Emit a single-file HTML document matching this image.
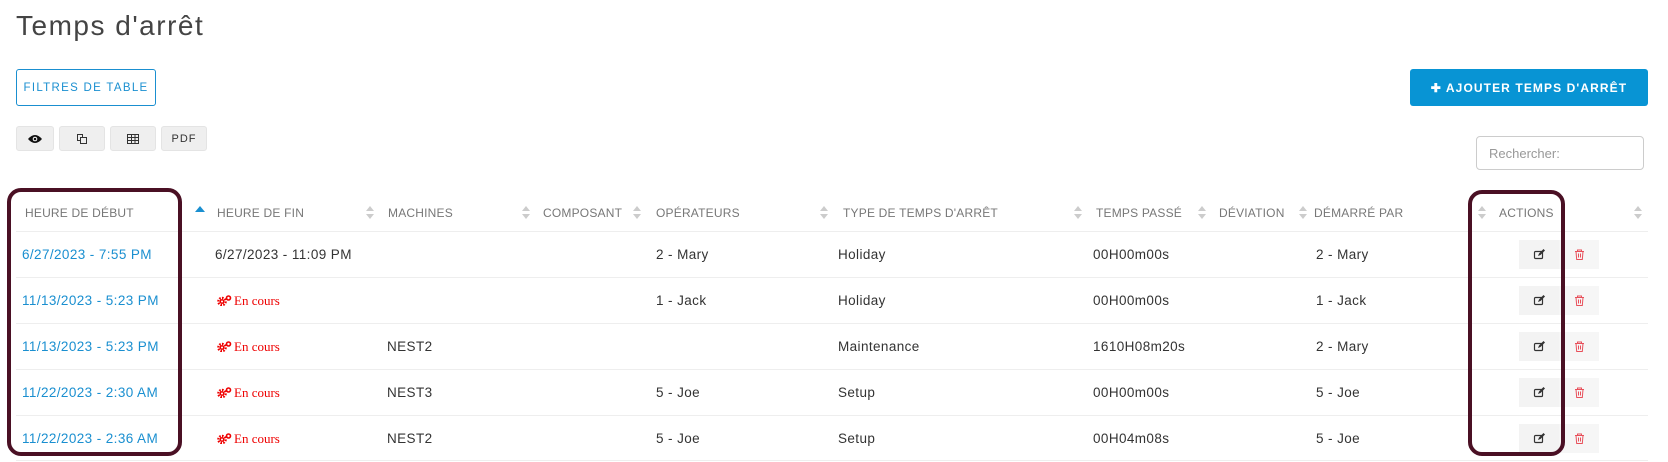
<!DOCTYPE html>
<html><head><meta charset="utf-8"><style>
*{margin:0;padding:0;box-sizing:border-box}
body{width:1668px;height:462px;background:#fff;font-family:"Liberation Sans",sans-serif;position:relative;overflow:hidden;color:#333}
.a{position:absolute;white-space:nowrap}
.title{left:16px;top:10px;font-size:28px;color:#444;letter-spacing:1.5px}
.btn{position:absolute;border-radius:3px;font-size:12px;letter-spacing:1px;display:flex;align-items:center;justify-content:center}
.sb{background:#efefef;border:1px solid #e4e4e4;top:126px;height:25px;font-size:11px;color:#333}
.h{font-size:12px;color:#777;letter-spacing:.2px;top:206px}
.d{font-size:13.5px;color:#333;letter-spacing:.4px}
.b{color:#1a8fd0}
.line{position:absolute;left:16px;width:1632px;height:1px;background:#eee}
.ar{position:absolute;top:205px;width:8px;height:16px}
.ar:before{content:"";position:absolute;left:0;top:1px;border:4px solid transparent;border-bottom:5px solid #ccc;border-top:0}
.ar:after{content:"";position:absolute;left:0;top:9px;border:4px solid transparent;border-top:5px solid #ccc;border-bottom:0}
.ec{font-family:"Liberation Serif",serif;color:#e00;font-size:13px}
.ec svg{vertical-align:-1px;margin-right:2px}
.eb{position:absolute;left:1519px;width:40px;height:29px;background:#f3f3f3}
.db{position:absolute;left:1559px;width:40px;height:29px;background:#f6f6f6}
.box{position:absolute;border:4px solid #4a1024;border-radius:14px}
</style></head><body>
<div class="a title">Temps d'arrêt</div>
<div class="btn" style="left:16px;top:69px;width:140px;height:37px;border:1px solid #1a8fd0;color:#1a8fd0;font-size:11.5px;letter-spacing:1.3px">FILTRES DE TABLE</div>
<div class="btn" style="left:1410px;top:69px;width:238px;height:37px;background:#0894d4;color:#fff;font-size:12px;font-weight:bold;letter-spacing:1.1px">✚ AJOUTER TEMPS D'ARRÊT</div>
<div class="btn sb" style="left:16px;width:38px"><svg width="16" height="10" viewBox="0 0 16 10"><path d="M1 5Q8-3 15 5Q8 13 1 5Z" fill="#111"/><circle cx="8" cy="5" r="2.3" fill="#fff"/><circle cx="8" cy="5" r="1.3" fill="#111"/></svg></div>
<div class="btn sb" style="left:59px;width:46px"><svg width="12" height="12" viewBox="0 0 12 12" fill="none" stroke="#333"><rect x="1.5" y="1.5" width="5" height="6"/><rect x="4.5" y="4.5" width="6" height="6" fill="#efefef"/></svg></div>
<div class="btn sb" style="left:110px;width:46px"><svg width="12" height="10" viewBox="0 0 12 10" fill="none" stroke="#333"><rect x=".5" y=".5" width="11" height="9"/><path d="M.5 3.5h11M.5 6.5h11M4.5 .5v9M8 .5v9"/></svg></div>
<div class="btn sb" style="left:161px;width:46px">PDF</div>
<div class="a" style="left:1476px;top:136px;width:168px;height:34px;border:1px solid #ccc;border-radius:4px;font-size:13px;color:#999;padding:9px 12px">Rechercher:</div>

<div class="a h" style="left:25px">HEURE DE DÉBUT</div>
<div class="a" style="left:195px;top:206px;border:5px solid transparent;border-bottom:6px solid #1a8fd0;border-top:0"></div>
<div class="a h" style="left:217px">HEURE DE FIN</div><div class="ar" style="left:366px"></div>
<div class="a h" style="left:388px">MACHINES</div><div class="ar" style="left:522px"></div>
<div class="a h" style="left:543px">COMPOSANT</div><div class="ar" style="left:633px"></div>
<div class="a h" style="left:656px">OPÉRATEURS</div><div class="ar" style="left:820px"></div>
<div class="a h" style="left:843px">TYPE DE TEMPS D'ARRÊT</div><div class="ar" style="left:1074px"></div>
<div class="a h" style="left:1096px">TEMPS PASSÉ</div><div class="ar" style="left:1198px"></div>
<div class="a h" style="left:1219px">DÉVIATION</div><div class="ar" style="left:1299px"></div>
<div class="a h" style="left:1314px">DÉMARRÉ PAR</div><div class="ar" style="left:1478px"></div>
<div class="a h" style="left:1499px">ACTIONS</div><div class="ar" style="left:1634px"></div>

<div class="line" style="top:231px"></div><div class="line" style="top:277px"></div><div class="line" style="top:323px"></div><div class="line" style="top:369px"></div><div class="line" style="top:415px"></div><div class="line" style="top:460px"></div>

<div class="a d b" style="left:22px;top:247px">6/27/2023 - 7:55 PM</div>
<div class="a d" style="left:215px;top:247px">6/27/2023 - 11:09 PM</div>
<div class="a d" style="left:656px;top:247px">2 - Mary</div>
<div class="a d" style="left:838px;top:247px">Holiday</div>
<div class="a d" style="left:1093px;top:247px">00H00m00s</div>
<div class="a d" style="left:1316px;top:247px">2 - Mary</div>

<div class="a d b" style="left:22px;top:293px">11/13/2023 - 5:23 PM</div>
<div class="a ec" style="left:217px;top:293px"><svg width="15" height="11" viewBox="0 0 15 11"><circle cx="5" cy="6.5" r="3.6" fill="none" stroke="#e00" stroke-width="2.4" stroke-dasharray="1.6 1.2"/><circle cx="5" cy="6.5" r="2.4" fill="#e00"/><circle cx="5" cy="6.5" r="1" fill="#fff"/><circle cx="11.5" cy="3" r="2" fill="none" stroke="#e00" stroke-width="1.6"/></svg>En cours</div>
<div class="a d" style="left:656px;top:293px">1 - Jack</div>
<div class="a d" style="left:838px;top:293px">Holiday</div>
<div class="a d" style="left:1093px;top:293px">00H00m00s</div>
<div class="a d" style="left:1316px;top:293px">1 - Jack</div>

<div class="a d b" style="left:22px;top:339px">11/13/2023 - 5:23 PM</div>
<div class="a ec" style="left:217px;top:339px"><svg width="15" height="11" viewBox="0 0 15 11"><circle cx="5" cy="6.5" r="3.6" fill="none" stroke="#e00" stroke-width="2.4" stroke-dasharray="1.6 1.2"/><circle cx="5" cy="6.5" r="2.4" fill="#e00"/><circle cx="5" cy="6.5" r="1" fill="#fff"/><circle cx="11.5" cy="3" r="2" fill="none" stroke="#e00" stroke-width="1.6"/></svg>En cours</div>
<div class="a d" style="left:387px;top:339px">NEST2</div>
<div class="a d" style="left:838px;top:339px">Maintenance</div>
<div class="a d" style="left:1093px;top:339px">1610H08m20s</div>
<div class="a d" style="left:1316px;top:339px">2 - Mary</div>

<div class="a d b" style="left:22px;top:385px">11/22/2023 - 2:30 AM</div>
<div class="a ec" style="left:217px;top:385px"><svg width="15" height="11" viewBox="0 0 15 11"><circle cx="5" cy="6.5" r="3.6" fill="none" stroke="#e00" stroke-width="2.4" stroke-dasharray="1.6 1.2"/><circle cx="5" cy="6.5" r="2.4" fill="#e00"/><circle cx="5" cy="6.5" r="1" fill="#fff"/><circle cx="11.5" cy="3" r="2" fill="none" stroke="#e00" stroke-width="1.6"/></svg>En cours</div>
<div class="a d" style="left:387px;top:385px">NEST3</div>
<div class="a d" style="left:656px;top:385px">5 - Joe</div>
<div class="a d" style="left:838px;top:385px">Setup</div>
<div class="a d" style="left:1093px;top:385px">00H00m00s</div>
<div class="a d" style="left:1316px;top:385px">5 - Joe</div>

<div class="a d b" style="left:22px;top:431px">11/22/2023 - 2:36 AM</div>
<div class="a ec" style="left:217px;top:431px"><svg width="15" height="11" viewBox="0 0 15 11"><circle cx="5" cy="6.5" r="3.6" fill="none" stroke="#e00" stroke-width="2.4" stroke-dasharray="1.6 1.2"/><circle cx="5" cy="6.5" r="2.4" fill="#e00"/><circle cx="5" cy="6.5" r="1" fill="#fff"/><circle cx="11.5" cy="3" r="2" fill="none" stroke="#e00" stroke-width="1.6"/></svg>En cours</div>
<div class="a d" style="left:387px;top:431px">NEST2</div>
<div class="a d" style="left:656px;top:431px">5 - Joe</div>
<div class="a d" style="left:838px;top:431px">Setup</div>
<div class="a d" style="left:1093px;top:431px">00H04m08s</div>
<div class="a d" style="left:1316px;top:431px">5 - Joe</div>

<div class="eb" style="top:240px"></div><div class="db" style="top:240px"></div>
<div class="eb" style="top:286px"></div><div class="db" style="top:286px"></div>
<div class="eb" style="top:332px"></div><div class="db" style="top:332px"></div>
<div class="eb" style="top:378px"></div><div class="db" style="top:378px"></div>
<div class="eb" style="top:424px"></div><div class="db" style="top:424px"></div>
<svg class="a" style="left:0;top:0" width="1668" height="462">
<defs>
<g id="ed"><rect x="0.5" y="2.5" width="8" height="7" rx="1" fill="none" stroke="#333" stroke-width="1.2"/><path d="M4 7l1-2.5 4.5-4.5 1.5 1.5-4.5 4.5z" fill="#333"/></g>
<g id="tr" fill="none" stroke="#e8505b" stroke-width="1"><path d="M1 2.5h9M3.5 2.5v-1.5h4v1.5M2 2.5l.7 8h5.6l.7-8M4.5 4.5v4M6.5 4.5v4"/></g>
</defs>
<use href="#ed" x="1534" y="249"/><use href="#tr" x="1574" y="249"/>
<use href="#ed" x="1534" y="295"/><use href="#tr" x="1574" y="295"/>
<use href="#ed" x="1534" y="341"/><use href="#tr" x="1574" y="341"/>
<use href="#ed" x="1534" y="387"/><use href="#tr" x="1574" y="387"/>
<use href="#ed" x="1534" y="433"/><use href="#tr" x="1574" y="433"/>
</svg>
<div class="box" style="left:7px;top:188px;width:175px;height:268px"></div>
<div class="box" style="left:1468px;top:190px;width:97px;height:266px"></div>
</body></html>
